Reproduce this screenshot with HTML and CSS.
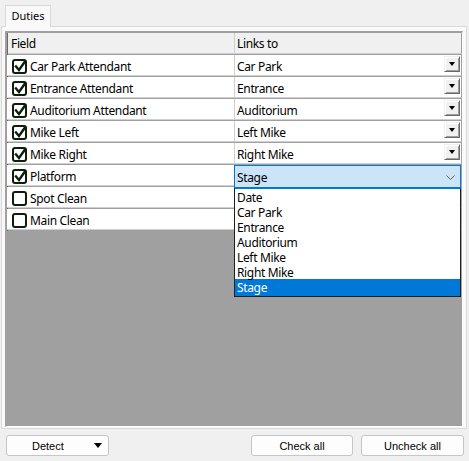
FILE: index.html
```html
<!DOCTYPE html>
<html>
<head>
<meta charset="utf-8">
<link rel="stylesheet" href="styles.css">
</head>
<body>
<div class="tabs"><div class="tab">Duties</div></div>
<div class="panel">
  <div class="grid">
    <div class="row head">
      <div class="cell c1"><span class="htext">Field</span></div>
      <div class="cell c2"><span class="htext">Links to</span></div>
    </div>
    <div class="row">
      <div class="cell c1"><svg class="cb" viewBox="0 0 16 16"><rect x="1" y="2" width="13" height="13" rx="2" class="box"/><path d="M4 8.5 L7 12 L13 3.5" class="tick"/></svg><span>Car Park Attendant</span></div>
      <div class="cell c2"><span>Car Park</span><i class="btn"></i></div>
    </div>
    <div class="row">
      <div class="cell c1"><svg class="cb" viewBox="0 0 16 16"><rect x="1" y="2" width="13" height="13" rx="2" class="box"/><path d="M4 8.5 L7 12 L13 3.5" class="tick"/></svg><span>Entrance Attendant</span></div>
      <div class="cell c2"><span>Entrance</span><i class="btn"></i></div>
    </div>
    <div class="row">
      <div class="cell c1"><svg class="cb" viewBox="0 0 16 16"><rect x="1" y="2" width="13" height="13" rx="2" class="box"/><path d="M4 8.5 L7 12 L13 3.5" class="tick"/></svg><span>Auditorium Attendant</span></div>
      <div class="cell c2"><span>Auditorium</span><i class="btn"></i></div>
    </div>
    <div class="row">
      <div class="cell c1"><svg class="cb" viewBox="0 0 16 16"><rect x="1" y="2" width="13" height="13" rx="2" class="box"/><path d="M4 8.5 L7 12 L13 3.5" class="tick"/></svg><span>Mike Left</span></div>
      <div class="cell c2"><span>Left Mike</span><i class="btn"></i></div>
    </div>
    <div class="row">
      <div class="cell c1"><svg class="cb" viewBox="0 0 16 16"><rect x="1" y="2" width="13" height="13" rx="2" class="box"/><path d="M4 8.5 L7 12 L13 3.5" class="tick"/></svg><span>Mike Right</span></div>
      <div class="cell c2"><span>Right Mike</span><i class="btn"></i></div>
    </div>
    <div class="row">
      <div class="cell c1"><svg class="cb" viewBox="0 0 16 16"><rect x="1" y="2" width="13" height="13" rx="2" class="box"/><path d="M4 8.5 L7 12 L13 3.5" class="tick"/></svg><span>Platform</span></div>
      <div class="cell c2"></div>
    </div>
    <div class="row">
      <div class="cell c1"><svg class="cb" viewBox="0 0 16 16"><rect x="1" y="2" width="13" height="13" rx="2" class="box"/></svg><span>Spot Clean</span></div>
      <div class="cell c2"></div>
    </div>
    <div class="row">
      <div class="cell c1"><svg class="cb" viewBox="0 0 16 16"><rect x="1" y="2" width="13" height="13" rx="2" class="box"/></svg><span>Main Clean</span></div>
      <div class="cell c2"></div>
    </div>
    <div class="empty"></div>

    <div class="combo">
      <span>Stage</span>
      <svg class="chev" viewBox="0 0 9 5"><path d="M0.5 0.5 L4.5 4.5 L8.5 0.5"/></svg>
    </div>
    <ul class="list">
      <li>Date</li>
      <li>Car Park</li>
      <li>Entrance</li>
      <li>Auditorium</li>
      <li>Left Mike</li>
      <li>Right Mike</li>
      <li class="sel">Stage</li>
    </ul>
  </div>
</div>
<div class="buttons">
  <button class="pb detect"><span>Detect</span><i class="tri"></i></button>
  <div class="spacer"></div>
  <button class="pb check">Check all</button>
  <button class="pb uncheck">Uncheck all</button>
</div>
</body>
</html>
```
FILE: styles.css
```css
html, body {
  margin: 0;
  padding: 0;
}
body {
  width: 469px;
  height: 461px;
  background: #f0f0f0;
  font-family: "Noto Sans", "Open Sans", sans-serif;
  font-size: 12px;
  letter-spacing: -0.35px;
  color: #000;
  overflow: hidden;
}
.tabs {
  height: 26px;
  padding: 5px 0 0 5px;
  box-sizing: border-box;
  display: flex;
  position: relative;
  z-index: 1;
}
.tab {
  width: 46px;
  height: 22px;
  box-sizing: border-box;
  border: 1px solid #d9d9d9;
  border-bottom: none;
  background: #f9f9f9;
  font-size: 11px;
  letter-spacing: 0;
  line-height: 19px;
  text-align: center;
}
.panel {
  margin: 0 2px 0 1px;
  height: 403px;
  box-sizing: border-box;
  border: 1px solid #d9d9d9;
  background: #f9f9f9;
  padding: 4px 0 0 3px;
}
.grid {
  position: relative;
  width: 458px;
  height: 396px;
  box-sizing: border-box;
  border-left: 2px solid #a0a0a0;
  border-top: 2px solid #a0a0a0;
  border-right: 1px solid #ffffff;
  border-bottom: 1px solid #ffffff;
  box-shadow: inset 1px 1px 0 #696969;
  display: flex;
  flex-direction: column;
  background: #a0a0a0;
}
.row {
  display: flex;
  height: 22px;
  flex: none;
}
.cell {
  height: 21px;
  box-sizing: border-box;
  padding-top: 3px;
  border-bottom: 1px solid #d0d0d0;
  border-right: 1px solid #d0d0d0;
  background: #fff;
  display: flex;
  align-items: center;
  position: relative;
  white-space: nowrap;
}
.head .cell {
  padding-top: 0;
  background: #f0f0f0;
}
.c1 {
  width: 228px;
  padding-left: 4px;
}
.c2 {
  width: 227px;
  padding-left: 2px;
  border-right-color: #a0a0a0;
}
.head .c1 {
  margin-left: 1px;
  width: 227px;
  padding-left: 3px;
}
.cb {
  width: 16px;
  height: 16px;
  margin-right: 2px;
  margin-left: 1px;
  margin-top: -2px;
  flex: none;
}
.cb .box {
  fill: #fff;
  stroke: #0b1f0b;
  stroke-width: 2;
}
.cb .tick {
  fill: none;
  stroke: #0b1f0b;
  stroke-width: 2.4;
  stroke-linecap: square;
}
.btn {
  position: absolute;
  right: 1px;
  top: 1px;
  width: 16px;
  height: 16px;
  box-sizing: border-box;
  background: #f0f0f0;
  border-top: 1px solid #f0f0f0;
  border-left: 1px solid #f0f0f0;
  border-right: 1px solid #696969;
  border-bottom: 1px solid #696969;
  box-shadow: inset 1px 1px 0 #fff, inset -1px -1px 0 #a0a0a0;
}
.btn::after {
  content: "";
  position: absolute;
  left: 4px;
  top: 5px;
  border-left: 3.5px solid transparent;
  border-right: 3.5px solid transparent;
  border-top: 4px solid #000;
}
.empty {
  flex: 1;
  background: #a0a0a0;
}
.combo {
  position: absolute;
  left: 227px;
  top: 132px;
  width: 227px;
  height: 23px;
  box-sizing: border-box;
  border: 1px solid #0078d7;
  background: #cce4f7;
  display: flex;
  align-items: center;
  padding-left: 2px;
  padding-top: 1px;
}
.combo span {
  flex: 1;
}
.chev {
  width: 9px;
  height: 5px;
  margin-right: 5px;
}
.chev path {
  fill: none;
  stroke: #606060;
  stroke-width: 1;
}
.list {
  position: absolute;
  left: 227px;
  top: 155px;
  width: 227px;
  margin: 0;
  padding: 0;
  list-style: none;
  box-sizing: border-box;
  border: 1px solid #1f1f1f;
  border-top-color: #0078d7;
  background: #fff;
}
.list li {
  height: 15px;
  line-height: 15px;
  padding-left: 2px;
  padding-top: 1px;
  margin-bottom: -1px;
}
.list li.sel {
  background: #0078d7;
  color: #fff;
  height: 16px;
  margin-bottom: 0;
}
.buttons {
  display: flex;
  padding: 6px 5px 0 6px;
  gap: 8px;
}
.spacer {
  flex: 1;
}
.pb {
  font-family: "Liberation Sans", Arial, sans-serif;
  font-size: 11px;
  letter-spacing: 0;
  height: 21px;
  width: 102px;
  margin: 0;
  padding: 0;
  box-sizing: border-box;
  border: 1px solid #c6c6c6;
  border-radius: 3px;
  background: #fdfdfd;
  color: #000;
}
.detect {
  display: flex;
  align-items: center;
  padding-left: 25px;
  padding-right: 6px;
  width: 103px;
}
.tri {
  margin-left: auto;
  border-left: 4px solid transparent;
  border-right: 4px solid transparent;
  border-top: 5px solid #000;
}
.uncheck {
  width: 103px;
}
```
